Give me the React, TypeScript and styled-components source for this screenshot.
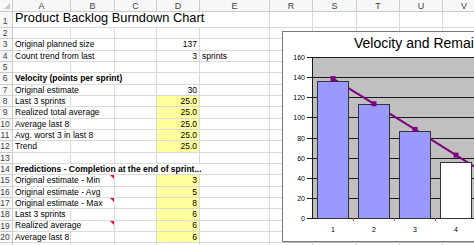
import React from 'react';
import styled, { createGlobalStyle, css } from 'styled-components';

const GlobalStyle = createGlobalStyle`
  html, body {
    margin: 0;
    padding: 0;
    background: #fff;
    overflow: hidden;
  }
  body {
    font-family: "Liberation Sans", Arial, sans-serif;
  }
`;

const COLS = ['A', 'B', 'C', 'D', 'E', 'R', 'S', 'T', 'U', 'V'];
const COL_WIDTHS = [58, 44, 42, 43, 70, 43, 44, 43, 43, 43];
// row 21 only peeks in at the bottom edge, its number is not visible
const ROW_COUNT = 21;
const ROW_H = 11.333;
const GRID = '#dadada';
const HEAD_LINE = '#cbcbcb';

type CellDef = {
    col: number;
    span?: number;
    text: string;
    right?: boolean;
    bold?: boolean;
    fill?: boolean;
    comment?: boolean;
    big?: boolean;
};

const D = 3;
const E = 4;

const rows: Record<number, CellDef[]> = {
    1: [{col: 0, span: 5, text: 'Product Backlog Burndown Chart', big: true}],
    3: [{col: 0, span: 2, text: 'Original planned size'}, {col: D, text: '137', right: true}],
    4: [{col: 0, span: 2, text: 'Count trend from last'}, {col: D, text: '3', right: true}, {col: E, text: 'sprints'}],
    6: [{col: 0, span: 3, text: 'Velocity (points per sprint)', bold: true}],
    7: [{col: 0, span: 2, text: 'Original estimate'}, {col: D, text: '30', right: true}],
    8: [{col: 0, text: 'Last 3 sprints'}, {col: D, text: '25.0', right: true, fill: true}],
    9: [{col: 0, span: 2, text: 'Realized total average'}, {col: D, text: '25.0', right: true, fill: true}],
    10: [{col: 0, text: 'Average last 8'}, {col: D, text: '25.0', right: true, fill: true}],
    11: [{col: 0, span: 2, text: 'Avg. worst 3 in last 8'}, {col: D, text: '25.0', right: true, fill: true}],
    12: [{col: 0, text: 'Trend'}, {col: D, text: '25.0', right: true, fill: true}],
    14: [{col: 0, span: 5, text: 'Predictions - Completion at the end of sprint...', bold: true}],
    15: [{col: 0, span: 2, text: 'Original estimate - Min', comment: true}, {col: D, text: '3', right: true, fill: true}],
    16: [{col: 0, span: 2, text: 'Original estimate - Avg'}, {col: D, text: '5', right: true, fill: true}],
    17: [{col: 0, span: 2, text: 'Original estimate - Max', comment: true}, {col: D, text: '8', right: true, fill: true}],
    18: [{col: 0, text: 'Last 3 sprints'}, {col: D, text: '6', right: true, fill: true}],
    19: [{col: 0, span: 2, text: 'Realized average', comment: true}, {col: D, text: '6', right: true, fill: true}],
    20: [{col: 0, text: 'Average last 8'}, {col: D, text: '6', right: true, fill: true}],
};

const Page = styled.div`
  position: relative;
  width: 474px;
  height: 245px;
  overflow: hidden;
`;

const Sheet = styled.div`
  display: grid;
  grid-template-columns: 13px ${COL_WIDTHS.map(w => w + 'px').join(' ')};
  grid-template-rows: 12px 16px repeat(${ROW_COUNT - 1}, ${ROW_H}px);
  font-size: 8.5px;
  color: #000;
`;

const HeaderBase = css`
  box-sizing: border-box;
  background: #f7f7f7;
  color: #444;
  border-right: 1px solid ${HEAD_LINE};
  border-bottom: 1px solid ${HEAD_LINE};
  display: flex;
  align-items: center;
  justify-content: center;
`;

const Corner = styled.div`
  ${HeaderBase};
  position: relative;
  &::after {
    content: '';
    position: absolute;
    right: 2px;
    bottom: 2px;
    border-left: 6px solid transparent;
    border-bottom: 6px solid #c8c8c8;
  }
`;

const ColHeader = styled.div`
  ${HeaderBase};
  font-size: 9px;
`;

const RowHeader = styled.div<{ $big?: boolean }>`
  ${HeaderBase};
  padding-right: 2px;
  font-size: 8.5px;
  align-items: ${p => (p.$big ? 'flex-end' : 'center')};
  padding-bottom: ${p => (p.$big ? '1px' : '0')};
`;

const Cell = styled.div<{
    $span: number;
    $right?: boolean;
    $bold?: boolean;
    $fill?: boolean;
    $comment?: boolean;
    $big?: boolean;
}>`
  grid-column: span ${p => p.$span};
  position: relative;
  box-sizing: border-box;
  border-right: 1px solid ${GRID};
  border-bottom: 1px solid ${GRID};
  background: ${p => (p.$fill ? '#ffff9c' : '#fff')};
  padding: 0 2px;
  display: flex;
  align-items: ${p => (p.$big ? 'flex-end' : 'center')};
  justify-content: ${p => (p.$right ? 'flex-end' : 'flex-start')};
  white-space: nowrap;
  font-weight: ${p => (p.$bold ? 'bold' : 'normal')};
  font-size: ${p => (p.$big ? '12.8px' : '8.5px')};
  line-height: 1;
  padding-bottom: ${p => (p.$big ? '2px' : '0')};
  ${p => p.$comment && css`
    &::after {
      content: '';
      position: absolute;
      top: 0;
      right: 0;
      border-left: 4px solid transparent;
      border-top: 4px solid #e0142a;
    }
  `}
`;

function SheetRow({nr}: { nr: number }) {
    const defs = rows[nr] || [];
    const cells: React.ReactNode[] = [];
    let c = 0;
    while (c < COLS.length) {
        const def = defs.find(d => d.col === c);
        if (def) {
            const span = def.span || 1;
            cells.push(
                <Cell key={c} $span={span} $right={def.right} $bold={def.bold}
                      $fill={def.fill} $comment={def.comment} $big={def.big}>
                    {def.text}
                </Cell>
            );
            c += span;
        } else {
            cells.push(<Cell key={c} $span={1}/>);
            c += 1;
        }
    }
    return (
        <>
            <RowHeader $big={nr === 1}>{nr < ROW_COUNT ? nr : ''}</RowHeader>
            {cells}
        </>
    );
}

const ChartBox = styled.div`
  position: absolute;
  left: 282px;
  top: 31px;
  width: 232px;
  height: 211px;
  box-sizing: border-box;
  border: 1px solid #7a7a7a;
  background: #fff;
  box-shadow: 1px 1px 0 #b8b8b8;
  display: flex;
  flex-direction: column;
`;

const ChartTitle = styled.div`
  height: 20px;
  box-sizing: border-box;
  padding: 3px 0 0 71px;
  font-size: 14px;
  line-height: 16px;
  white-space: nowrap;
  color: #000;
`;

const PlotSvg = styled.svg`
  display: block;
  font-family: "Liberation Sans", Arial, sans-serif;
  font-size: 7px;
`;

const yOf = (v: number) => 218.5 - v * 161 / 160;
const gridY = (v: number) => Math.floor(yOf(v)) + 0.5;

const bars = [137, 114, 87, 56];
const trend = [139, 114, 88.5, 63, 37.5];
const PLOT_LEFT = 312;
const CAT_W = 41;

function VelocityChart() {
    const ticks = [0, 20, 40, 60, 80, 100, 120, 140, 160];
    const centre = (i: number) => PLOT_LEFT + CAT_W * i + CAT_W / 2 + 0.5;
    const linePts = trend.map((v, i) => `${centre(i)},${yOf(v)}`).join(' ');
    return (
        <ChartBox>
            <ChartTitle>Velocity and Remaining Work</ChartTitle>
            <PlotSvg width={200} height={189} viewBox="283 52 200 189">
                <rect x={PLOT_LEFT} y={57.5} width={180} height={161} fill="#c0c0c0"/>
                {ticks.map(v => (
                    <g key={v}>
                        <line x1={307} x2={492} y1={gridY(v)} y2={gridY(v)} stroke="#1a1a1a" strokeWidth={1}/>
                        <text x={305} y={gridY(v) + 2.5} textAnchor="end" fill="#000">{v}</text>
                    </g>
                ))}
                <line x1={PLOT_LEFT + 0.5} x2={PLOT_LEFT + 0.5} y1={57.5} y2={218.5} stroke="#1a1a1a"/>
                <polyline points={linePts} fill="none" stroke="#800080" strokeWidth={2}/>
                {bars.map((v, i) => (
                    <rect key={i} x={PLOT_LEFT + 5.5 + CAT_W * i} y={Math.round(yOf(v)) + 0.5}
                          width={31} height={218 - Math.round(yOf(v))}
                          fill={i === 3 ? '#ffffff' : '#9999ff'} stroke="#333" strokeWidth={1}/>
                ))}
                {trend.slice(0, 4).map((v, i) => (
                    <rect key={i} x={centre(i) - 2.5} y={yOf(v) - 2.5} width={5} height={5} fill="#800080"/>
                ))}
                {[1, 2, 3, 4].map(i => (
                    <line key={i} x1={PLOT_LEFT + CAT_W * i + 0.5} x2={PLOT_LEFT + CAT_W * i + 0.5}
                          y1={218} y2={221} stroke="#e04a4a" strokeWidth={1}/>
                ))}
                {bars.map((_, i) => (
                    <text key={i} x={centre(i)} y={232} textAnchor="middle" fill="#000">{i + 1}</text>
                ))}
            </PlotSvg>
        </ChartBox>
    );
}

function App() {
    const rowNrs = Array.from({length: ROW_COUNT}, (_, i) => i + 1);
    return (
        <Page>
            <GlobalStyle/>
            <Sheet>
                <Corner/>
                {COLS.map(c => <ColHeader key={c}>{c}</ColHeader>)}
                {rowNrs.map(nr => <SheetRow key={nr} nr={nr}/>)}
            </Sheet>
            <VelocityChart/>
        </Page>
    );
}

export default App;
